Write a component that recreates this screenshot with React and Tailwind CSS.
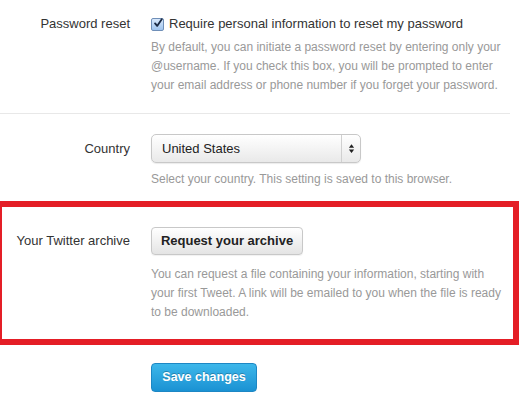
const Help = ({ children, className = '' }) => (
    <p className={`text-[12px] leading-[19px] text-[#999] ${className}`}>{children}</p>
);

export default function App() {
    return (
        <div className="w-[531px] h-[405px] bg-white overflow-hidden text-[#333] [font-family:'Liberation_Sans',Arial,sans-serif]">
            <div className="w-[510px] border-b border-[#e8e8e8] pt-[14px] pb-[18px] flex">
                <div className="w-[130px] shrink-0 text-right text-[13px] leading-[20px]">Password reset</div>
                <div className="ml-[21px] w-[355px]">
                    <label className="flex items-center gap-[5px] text-[13px] leading-[20px]">
                        <span className="w-[13px] h-[13px] rounded-[2px] border border-[#6f8fb8] bg-gradient-to-b from-[#d8e8fb] to-[#9fc4ee] flex items-center justify-center">
                            <svg viewBox="0 0 12 12" className="w-[12px] h-[12px] -mt-[2px] ml-[1px]">
                                <path d="M2.5 6.5 L5 9.5 L10.5 1.5" fill="none" stroke="#1b2a44" strokeWidth="2.2" strokeLinecap="round" strokeLinejoin="round" />
                            </svg>
                        </span>
                        Require personal information to reset my password
                    </label>
                    <Help className="mt-[4px]">
                        By default, you can initiate a password reset by entering only your @username. If you check this box, you will be prompted to enter your email address or phone number if you forget your password.
                    </Help>
                </div>
            </div>

            <div className="pt-[20px] flex">
                <div className="w-[130px] shrink-0 text-right text-[13px] leading-[29px]">Country</div>
                <div className="ml-[21px]">
                    <div className="w-[210px] h-[29px] rounded-[5px] border border-[#c8c8c8] bg-gradient-to-b from-white to-[#e9e9e9] shadow-[0_1px_1px_rgba(0,0,0,0.08)] flex items-center">
                        <span className="flex-1 pl-[10px] text-[13px] text-[#222]">United States</span>
                        <span className="w-[19px] h-full border-l border-[#d0d0d0] flex flex-col items-center justify-center">
                            <svg viewBox="0 0 8 12" className="w-[7px] h-[11px]">
                                <path d="M4 1 L7 5 L1 5 Z M4 11 L7 7 L1 7 Z" fill="#222" />
                            </svg>
                        </span>
                    </div>
                    <Help className="mt-[7px]">Select your country. This setting is saved to this browser.</Help>
                </div>
            </div>

            <div className="mt-[12px] -ml-[4px] w-[523px] border-[6px] border-[#e41e26] pt-[20px] pb-[17px] flex">
                <div className="w-[128px] shrink-0 text-right text-[13px] leading-[28px]">Your Twitter archive</div>
                <div className="ml-[21px]">
                    <button className="h-[28px] w-[152px] rounded-[4px] border border-[#c8c8c8] bg-gradient-to-b from-white to-[#e4e4e4] text-[13px] font-bold text-[#222] shadow-[0_1px_1px_rgba(0,0,0,0.06)]">
                        Request your archive
                    </button>
                    <Help className="mt-[10px] leading-[18px] w-[350px]">
                        You can request a file containing your information, starting with your first Tweet. A link will be emailed to you when the file is ready to be downloaded.
                    </Help>
                </div>
            </div>

            <div className="mt-[18px] ml-[151px]">
                <button className="h-[29px] w-[106px] rounded-[4px] border border-[#1d87c4] bg-gradient-to-b from-[#3cb7ea] to-[#1a92d3] text-[12.5px] font-bold text-white [text-shadow:0_-1px_0_rgba(0,0,0,0.25)]">
                    Save changes
                </button>
            </div>
        </div>
    );
}
